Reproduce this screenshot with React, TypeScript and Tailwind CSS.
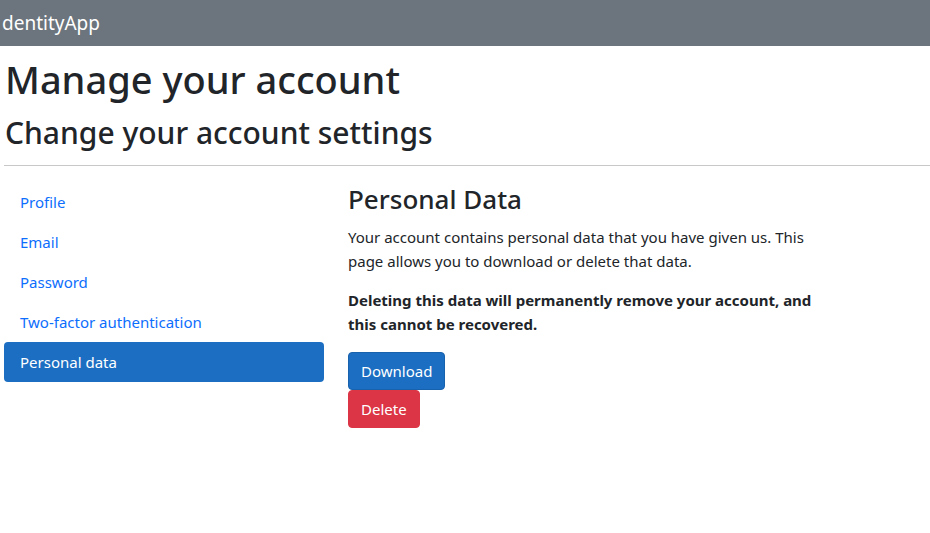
import React from "react"

const navItems = ["Profile", "Email", "Password", "Two-factor authentication", "Personal data"]

export default function App() {
  const active = "Personal data"

  return (
    <div className="min-h-screen bg-white text-[#212529]" style={{ fontFamily: '"Noto Sans", sans-serif' }}>
      {/* Top bar */}
      <header className="h-[46px] bg-[#6c757d] flex items-center px-[2px]">
        <span className="text-[19px] text-white leading-none">dentityApp</span>
      </header>

      <main className="pl-[4px]">
        <h1 className="text-[38px] font-medium leading-[1.2] pt-[11px] pl-[1px]">Manage your account</h1>
        <h2 className="text-[30px] font-medium leading-[1.2] mt-[12px] pl-[1px]">Change your account settings</h2>
        <hr className="mt-[14px] border-t border-[#c8c8c8]" />

        <div className="flex gap-[24px] mt-[16px]">
          {/* Side nav */}
          <ul className="w-[320px] shrink-0 flex flex-col">
            {navItems.map((item) => (
              <li key={item}>
                <a
                  className={
                    item === active
                      ? "block h-[40px] leading-[40px] px-[16px] text-[15px] rounded-[4px] bg-[#1b6ec2] text-white"
                      : "block h-[40px] leading-[40px] px-[16px] text-[15px] text-[#0d6efd]"
                  }
                >
                  {item}
                </a>
              </li>
            ))}
          </ul>

          {/* Content */}
          <section className="flex-1">
            <h3 className="text-[26px] font-medium leading-[1.2] mt-[2px]">Personal Data</h3>
            <div className="max-w-[480px] mt-[10px] text-[15px] leading-[24px]">
              <p>Your account contains personal data that you have given us. This page allows you to download or delete that data.</p>
              <p className="mt-[15px] font-bold">
                Deleting this data will permanently remove your account, and this cannot be recovered.
              </p>
            </div>
            <div className="mt-[16px] flex flex-col items-start">
              <button className="h-[38px] px-[12px] text-[15px] text-white bg-[#1b6ec2] border border-[#1861ac] rounded-[4px]">
                Download
              </button>
              <button className="h-[38px] px-[12px] text-[15px] text-white bg-[#dc3545] border border-[#dc3545] rounded-[4px]">
                Delete
              </button>
            </div>
          </section>
        </div>
      </main>
    </div>
  )
}
